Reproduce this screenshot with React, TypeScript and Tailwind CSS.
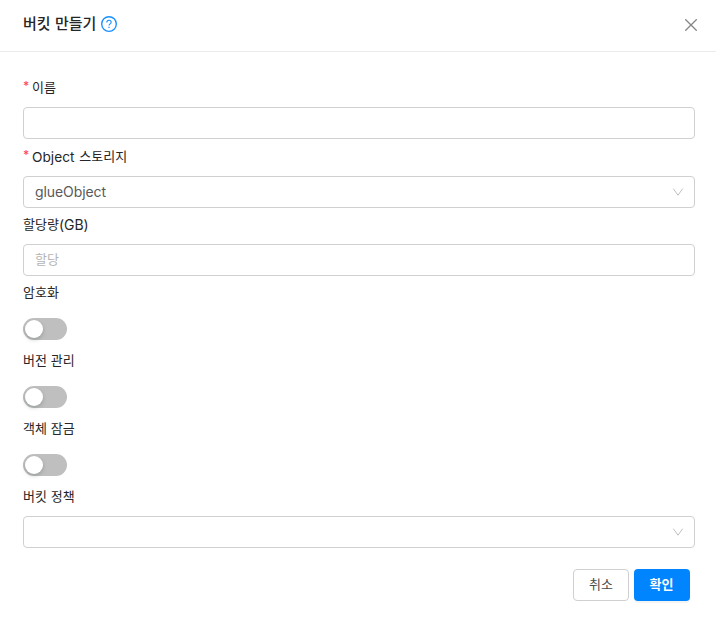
import { ReactNode } from "react";

function Label({ required, children }: { required?: boolean; children: ReactNode }) {
  return (
    <div className="flex h-[22px] items-start whitespace-pre text-[13px] leading-[20px] text-[#262626] [word-spacing:1px]">
      {required && (
        <span className="mr-[4px] w-[5px] font-['Inter'] text-[12px] font-medium leading-[18px] text-[#ff4d4f]">*</span>
      )}
      <span>{children}</span>
    </div>
  );
}

function Chevron() {
  return (
    <svg viewBox="0 0 12 12" className="h-3 w-3 fill-none stroke-[#bfbfbf]" strokeWidth="1">
      <path d="M1.3 2.7 6 9.2l4.7-6.5" />
    </svg>
  );
}

function SelectBox({ value }: { value?: string }) {
  return (
    <button className="flex h-8 w-full items-center justify-between rounded border border-[#d0d0d0] bg-white pl-[11px] pr-[10px] text-left text-sm text-[#595959]">
      <span className="font-['Inter'] text-[14px] tracking-[-0.08px]">{value}</span>
      <Chevron />
    </button>
  );
}

function Switch({ label }: { label: string }) {
  return (
    <button
      role="switch"
      aria-checked="false"
      aria-label={label}
      className="block h-[22px] w-11 rounded-full bg-[#bfbfbf] p-0.5"
    >
      <span className="block size-[18px] rounded-full bg-white shadow-[0_2px_4px_rgba(0,35,11,0.2)]" />
    </button>
  );
}

function SwitchField({ label }: { label: string }) {
  return (
    <div className="flex flex-col gap-[14px]">
      <Label>{label}</Label>
      <Switch label={label} />
    </div>
  );
}

export default function App() {
  return (
    <div className="h-[623px] w-full bg-white font-['Noto_Sans_CJK_KR',sans-serif]">
      <header className="flex h-[52px] items-center justify-between border-b border-[#ebebeb] pl-[23px] pr-[18px]">
        <div className="flex items-center gap-[5px] pb-[3px]">
          <h1 className="pb-[2px] text-[15px] font-medium leading-[20px] text-[#262626] [word-spacing:1px]">버킷 만들기</h1>
          <svg viewBox="0 0 16 16" className="size-4 fill-none stroke-[#1890ff]" strokeWidth="1.35">
            <circle cx="8" cy="8" r="7.3" />
            <path d="M5.8 6.4c0-1.3 1-2.1 2.2-2.1s2.2.8 2.2 2c0 1.7-2.2 1.5-2.2 3.3" strokeWidth="1.1" />
            <path d="M8 10.8v1.3" strokeWidth="1.2" />
          </svg>
        </div>
        <button aria-label="닫기" className="px-px pb-[2px]">
          <svg viewBox="0 0 12 12" className="block size-3 fill-none stroke-[#858585]" strokeWidth="1.3">
            <path d="M.3.3l11.4 11.4M11.7.3.3 11.7" />
          </svg>
        </button>
      </header>

      <main className="flex flex-col pl-[23px] pr-[21px] pt-[25px]">
        <div className="flex flex-col gap-2">
          <Label required>이름</Label>
          <input aria-label="이름" className="h-8 w-full rounded border border-[#d0d0d0] px-[11px] text-[13px] outline-none" />
        </div>
        <div className="mt-[7px] flex flex-col gap-2">
          <Label required>
            <span className="align-[-1px] font-['Inter'] text-[13.7px] leading-[16px]">Object </span>스토리지
          </Label>
          <SelectBox value="glueObject" />
        </div>
        <div className="mt-[6px] flex flex-col gap-2">
          <Label>
            할당량<span className="align-[-1px] font-['Inter'] text-[14px] leading-[16px]">(GB)</span>
          </Label>
          <input
            aria-label="할당량"
            placeholder="할당"
            className="h-8 w-full rounded border border-[#d0d0d0] px-[11px] pb-[3px] text-[13px] outline-none placeholder:text-[#b5b5b5]"
          />
        </div>
        <div className="mt-[6px] flex flex-col gap-[10px]">
          <SwitchField label="암호화" />
          <SwitchField label="버전 관리" />
          <SwitchField label="객체 잠금" />
        </div>
        <div className="mt-[10px] flex flex-col gap-2">
          <Label>버킷 정책</Label>
          <SelectBox />
        </div>
        <div className="mr-[5px] mt-[21px] flex justify-end gap-[5px]">
          <button className="h-8 w-14 rounded border border-[#d0d0d0] bg-white pb-[2px] text-[13px] text-[#4a4a4a]">취소</button>
          <button className="h-8 w-14 rounded bg-[#0085ff] pb-[2px] pr-[1px] text-[13px] font-bold text-white shadow-[0_2px_0_rgba(0,0,0,0.045)]">확인</button>
        </div>
      </main>
    </div>
  );
}
